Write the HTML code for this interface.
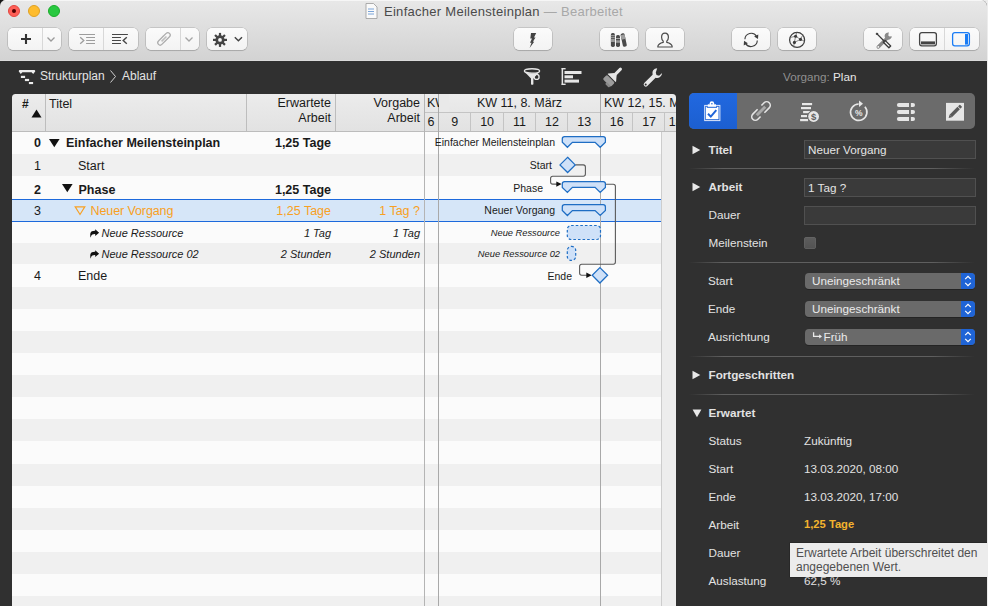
<!DOCTYPE html>
<html><head><meta charset="utf-8">
<style>
*{margin:0;padding:0;box-sizing:border-box}
html,body{width:988px;height:606px;overflow:hidden;background:#ececec}
body{position:relative;font-family:"Liberation Sans",sans-serif;}
.a{position:absolute}
#win{position:absolute;left:0;top:0;width:987px;height:606px;border-radius:6px 6px 0 0;overflow:hidden;background:#303030}
#tb{position:absolute;left:0;top:0;width:987px;height:61px;background:linear-gradient(#e8e8e8,#d3d3d3);border-bottom:1px solid #dadada;box-shadow:inset 0 1px 0 #f6f6f6}
.light{position:absolute;width:12px;height:12px;border-radius:50%}
.btn{position:absolute;top:28px;height:22px;background:linear-gradient(#fbfbfb,#f3f3f3);border-radius:5px;box-shadow:0 0 0 0.5px rgba(0,0,0,.22),0 1px 1px rgba(0,0,0,.12)}
.sep{position:absolute;top:0;width:1px;height:22px;background:#d8d8d8}
.title{position:absolute;top:4px;left:384px;font-size:13px;letter-spacing:.28px;color:#4a4a4a;white-space:pre}
/* table */
#tbl{position:absolute;left:12px;top:93px;width:664px;height:513px;background:#fbfbfb;overflow:hidden}
.hdr{position:absolute;top:0;height:38px;background:linear-gradient(#ececec,#e2e2e2);border-bottom:1px solid #bcbcbc}
.vl{position:absolute;width:1px;background:#c3c3c3}
.row{position:absolute;left:0;width:649px;height:22px}
.t{position:absolute;white-space:pre;font-size:12.5px;color:#1a1a1a}
.b{font-weight:bold}
.r{text-align:right}
#insp{position:absolute;left:676px;top:61px;width:311px;height:545px;background:#2e2e2e}
.lab{position:absolute;white-space:pre;font-size:11.7px;color:#e6e6e6}
.fld{position:absolute;left:128px;width:172px;height:19px;background:#393939;border:1px solid #4e4e4e}
.pop{position:absolute;left:129px;width:170px;height:16px;background:#6a6a6a;border-radius:4px;overflow:hidden}
.hsep{position:absolute;left:13px;width:286px;height:1px;background:linear-gradient(90deg,rgba(90,90,90,0),#5a5a5a 8%,#5a5a5a 92%,rgba(90,90,90,0))}
</style></head><body>
<div class="a" style="left:0;top:0;width:8px;height:8px;background:radial-gradient(circle at 0 0,#111 0,#222 40%,rgba(40,40,40,0) 100%)"></div>
<div id="win">
 <div id="tb">
  <div class="light" style="left:8px;top:5px;background:#fe5f57;border:0.5px solid #e2463f"></div>
  <div class="a" style="left:12px;top:9px;width:4px;height:4px;border-radius:50%;background:#4d0000"></div>
  <div class="light" style="left:28px;top:5px;background:#febc2e;border:0.5px solid #dea123"></div>
  <div class="light" style="left:48px;top:5px;background:#28c840;border:0.5px solid #1aab29"></div>

  <div class="btn" style="left:8px;width:53px"><div class="sep" style="left:34px"></div>
   <svg class="a" style="left:0;top:0" width="53" height="22"><path d="M18 6v10M13 11h10" stroke="#333" stroke-width="2.1"/><path d="M39.5 9.5l3.5 3.5 3.5-3.5" fill="none" stroke="#9a9a9a" stroke-width="1.3"/></svg></div>
  <div class="btn" style="left:69px;width:69px"><div class="sep" style="left:34px"></div>
   <svg class="a" style="left:0;top:0" width="69" height="22"><g stroke="#9d9d9d" stroke-width="1" fill="none"><path d="M10.2 6.5H26M17.1 9.5H26M17.1 12.5H26M17.1 15.5H26"/><path d="M11.2 9.2L14.8 12.5L11.2 15.8" stroke-width="1.3"/></g>
   <g stroke="#474747" stroke-width="1.15" fill="none"><path d="M43 6.5H58.9M43 9.5H51.9M43 12.5H51.9M43 15.5H51.9"/><path d="M57.8 9.2L54.2 12.5L57.8 15.8" stroke-width="1.4"/></g></svg></div>
  <div class="btn" style="left:146px;width:53px"><div class="sep" style="left:34px"></div>
   <svg class="a" style="left:0;top:0" width="53" height="22"><g transform="translate(18 10.9) rotate(-45) scale(.82)" fill="none" stroke="#acacac" stroke-width="1.5"><path d="M1.6 -2.9H-6.6A2.9 2.9 0 0 0 -6.6 2.9H-1.2"/><path d="M-1.6 2.9H6.6A2.9 2.9 0 0 0 6.6 -2.9H1.2"/><path d="M-4.2 0H4.2" stroke="#bdbdbd" stroke-width="2"/></g><path d="M39.5 9.5l3.5 3.5 3.5-3.5" fill="none" stroke="#a5a5a5" stroke-width="1.3"/></svg></div>
  <div class="btn" style="left:207px;width:40px">
   <svg class="a" style="left:0;top:0" width="40" height="22"><g transform="translate(13 11.9)"><g fill="#444"><circle r="4.6"/><rect x="-1.1" y="-7" width="2.2" height="14"/><rect x="-1.1" y="-7" width="2.2" height="14" transform="rotate(45)"/><rect x="-1.1" y="-7" width="2.2" height="14" transform="rotate(90)"/><rect x="-1.1" y="-7" width="2.2" height="14" transform="rotate(135)"/></g><circle r="1.9" fill="#f6f6f6"/></g><path d="M27.8 9.3l3.6 3.4 3.6-3.4" fill="none" stroke="#444" stroke-width="1.5"/></svg></div>
  <div class="btn" style="left:514px;width:38px">
   <svg class="a" style="left:0;top:0" width="38" height="22"><path d="M17 5h5.2l-2.2 4.5h1.5l-2.6 4.2h1.3l-4.6 6.2 1.9-5.2h-1.5l2-4.3h-1.7z" fill="#444"/></svg></div>
  <div class="btn" style="left:600px;width:38px">
   <svg class="a" style="left:0;top:0" width="38" height="22"><defs><clipPath id="bk1"><rect x="10.9" y="5.1" width="4" height="13.8" rx="1.6"/></clipPath><clipPath id="bk2"><rect x="16" y="7.1" width="4" height="11.8" rx="1.6"/></clipPath></defs>
   <g clip-path="url(#bk1)"><rect x="10" y="5" width="6" height="14" fill="#4a4a4a"/><rect x="10" y="7.2" width="6" height="1" fill="#a8a8a8"/><rect x="10" y="9.2" width="6" height=".9" fill="#a8a8a8"/><rect x="10" y="10.9" width="6" height="3.1" fill="#9a9a9a"/></g>
   <g clip-path="url(#bk2)"><rect x="15" y="7" width="6" height="12" fill="#4a4a4a"/><rect x="15" y="10" width="6" height="1" fill="#a8a8a8"/><rect x="15" y="12.3" width="6" height="2.5" fill="#9a9a9a"/></g>
   <g transform="rotate(-12 23.7 12)"><rect x="21.7" y="5.2" width="4" height="13.6" rx="1.6" fill="#4a4a4a"/><rect x="21.7" y="6.6" width="4" height="4.6" fill="#9c9c9c"/></g></svg></div>
  <div class="btn" style="left:646px;width:38px">
   <svg class="a" style="left:0;top:0" width="38" height="22"><path d="M19 5.2c-2.2 0-3.4 1.8-3.4 4 0 1.8.8 3.2 1.6 3.9v1.2c-2.5.6-4.9 1.7-5.3 3.9v.8h14.2v-.8c-.4-2.2-2.8-3.3-5.3-3.9v-1.2c.8-.7 1.6-2.1 1.6-3.9 0-2.2-1.2-4-3.4-4z" fill="none" stroke="#4a4a4a" stroke-width="1.2"/></svg></div>
  <div class="btn" style="left:732px;width:38px">
   <svg class="a" style="left:0;top:0" width="38" height="22"><g fill="none" stroke="#3e3e3e" stroke-width="1.15"><path d="M12.9 11.3a6.3 6.3 0 0 1 11.6-3.1"/><path d="M25.3 12.5a6.3 6.3 0 0 1-11.6 3.1"/></g><path d="M26.3 6.4l-.3 4.6-3.9-2.4z" fill="#3e3e3e"/><path d="M11.7 17.4l.3-4.6 3.9 2.4z" fill="#3e3e3e"/></svg></div>
  <div class="btn" style="left:778px;width:38px">
   <svg class="a" style="left:0;top:0" width="38" height="22"><circle cx="19.1" cy="11.9" r="7.5" fill="none" stroke="#3e3e3e" stroke-width="1.25"/><g stroke="#666" stroke-width=".75" fill="none"><path d="M17.6 8.3L22.5 11.4L16.4 14.4ZM17.6 8.3L19 4.4M17.6 8.3L12 9.5M22.5 11.4L26.4 13.2M16.4 14.4L15.6 19.2M22.5 11.4L25 6.5"/></g><g fill="#3a3a3a"><circle cx="17.6" cy="8.3" r="1.55"/><circle cx="22.5" cy="11.4" r="1.55"/><circle cx="16.4" cy="14.4" r="1.55"/></g></svg></div>
  <div class="btn" style="left:864px;width:38px">
   <svg class="a" style="left:0;top:0" width="38" height="22"><path d="M23.6 9.6L14.2 19" stroke="#8a8a8a" stroke-width="3.4" stroke-linecap="round"/><circle cx="14.3" cy="18.9" r=".9" fill="#f7f7f7"/><path d="M25.2 4.6a3.6 3.6 0 1 0 2.6 3.6l-2.3.4-1.2-1.2.4-2.3z" fill="#8a8a8a"/>
   <path d="M12.8 5.6L19.8 12.8" stroke="#3a3a3a" stroke-width="1.3"/><path d="M12.2 5.2l1.6 1.4" stroke="#3a3a3a" stroke-width="2"/><path d="M19.3 14.2l1.8-1.8 5.6 5.6-1.8 1.8z" fill="none" stroke="#3a3a3a" stroke-width="1.3" stroke-linejoin="round"/></svg></div>
  <div class="btn" style="left:910px;width:69px"><div class="sep" style="left:34px"></div>
   <svg class="a" style="left:0;top:0" width="69" height="22"><rect x="9.6" y="4.6" width="16.8" height="13.2" rx="2.2" fill="none" stroke="#444" stroke-width="1.3"/><rect x="11" y="13.4" width="14" height="3" fill="#444"/>
   <rect x="42.6" y="4.6" width="16.8" height="13.2" rx="2.2" fill="none" stroke="#1a7cf5" stroke-width="1.3"/><rect x="55" y="6" width="3" height="10.6" fill="#1a7cf5"/></svg></div>
  <svg class="a" style="left:365px;top:3px" width="13" height="16"><path d="M1 .5h7.5l3.5 3.5v11.5h-11z" fill="#fafafa" stroke="#9a9a9a" stroke-width=".8"/><path d="M3 6h6M3 8.5h6M3 11h6" stroke="#5b8fd0" stroke-width=".8"/></svg>
  <div class="title">Einfacher Meilensteinplan <span style="color:#a8a8a8">— Bearbeitet</span></div>
 </div>

 <div class="a" style="left:0;top:62px;width:676px;height:31px;background:#303030"></div>
 <svg class="a" style="left:18px;top:69px" width="18" height="16"><g fill="#ececec"><path d="M1.8 .9H16.2Q17.2 .9 17.2 1.9V2.6L15.2 4.9L13.6 3.2H4.4L2.8 4.9L.8 2.6V1.9Q.8 .9 1.8 .9Z"/><rect x="2.9" y="6.8" width="4.2" height="2.2"/><rect x="6.9" y="9.9" width="4.2" height="2.2"/><rect x="10.9" y="13" width="4.2" height="2.1"/></g></svg>
 <div class="a" style="left:40px;top:69px;font-size:12px;color:#e4e4e4;white-space:pre">Strukturplan</div>
 <svg class="a" style="left:109px;top:69px" width="8" height="15"><path d="M1.5 1.5l5 6-5 6" fill="none" stroke="#cfcfcf" stroke-width="1"/></svg>
 <div class="a" style="left:122px;top:69px;font-size:12px;color:#e4e4e4;white-space:pre">Ablauf</div>
 <svg class="a" style="left:520px;top:66px" width="150" height="22">
  <ellipse cx="12" cy="4.9" rx="7.6" ry="2.2" fill="none" stroke="#e6e6e6" stroke-width="1.4"/>
  <path d="M5 6.2Q12 9 19 6.2L13.4 12.5V18.2Q12.2 19.4 11 18.2V12.5Z" fill="#e6e6e6"/>
  <circle cx="16.6" cy="10.9" r="2.5" fill="none" stroke="#e6e6e6" stroke-width="1.3"/>
  <g fill="#e6e6e6"><rect x="41.6" y="2" width="1.5" height="17"/><rect x="41.6" y="2" width="4" height="1.4"/><rect x="41.6" y="17.6" width="4" height="1.4"/><rect x="44.5" y="5" width="17" height="3"/><rect x="44.5" y="9.3" width="8.5" height="3"/><rect x="44.5" y="13.6" width="14.5" height="3"/></g>
  <g transform="translate(92.3 11.3) rotate(45)"><rect x="-1.5" y="-13" width="3" height="10" rx="1.5" fill="#e6e6e6"/><path d="M-1.6 -4.5H1.6L5.6 .2V1H-5.6V.2Z" fill="#e6e6e6"/><rect x="-5.6" y="2" width="11.2" height="6" rx="1.4" fill="#9c9c9c"/><rect x="-.5" y="7.2" width="5.4" height="2.6" rx="1" fill="#8a8a8a"/></g>
  <path d="M137.2 2.2a4.9 4.9 0 0 0-4.6 6.6l-8.4 8.2a2.2 2.2 0 0 0 3.1 3.1l8.3-8.4a4.9 4.9 0 0 0 6.5-4.6l-3 2.6-2.6-.7-.7-2.6z" fill="#e6e6e6"/><circle cx="125.7" cy="18.5" r="1" fill="#303030"/>
 </svg>

<!--TBL-->
<div id="tbl">
<div class="a" style="left:0;top:39px;width:649px;height:22px;background:#fbfbfb"></div>
<div class="a" style="left:0;top:61px;width:649px;height:22px;background:#f0f0f0"></div>
<div class="a" style="left:0;top:83px;width:649px;height:23px;background:#fbfbfb"></div>
<div class="a" style="left:0;top:106px;width:649px;height:22px;background:#f0f0f0"></div>
<div class="a" style="left:0;top:128px;width:649px;height:22px;background:#fbfbfb"></div>
<div class="a" style="left:0;top:150px;width:649px;height:21px;background:#f0f0f0"></div>
<div class="a" style="left:0;top:171px;width:649px;height:23px;background:#fbfbfb"></div>
<div class="a" style="left:0;top:194px;width:649px;height:22px;background:#f0f0f0"></div>
<div class="a" style="left:0;top:216px;width:649px;height:22px;background:#fbfbfb"></div>
<div class="a" style="left:0;top:238px;width:649px;height:22px;background:#f0f0f0"></div>
<div class="a" style="left:0;top:260px;width:649px;height:22px;background:#fbfbfb"></div>
<div class="a" style="left:0;top:282px;width:649px;height:22px;background:#f0f0f0"></div>
<div class="a" style="left:0;top:304px;width:649px;height:22px;background:#fbfbfb"></div>
<div class="a" style="left:0;top:326px;width:649px;height:22px;background:#f0f0f0"></div>
<div class="a" style="left:0;top:348px;width:649px;height:23px;background:#fbfbfb"></div>
<div class="a" style="left:0;top:371px;width:649px;height:22px;background:#f0f0f0"></div>
<div class="a" style="left:0;top:393px;width:649px;height:22px;background:#fbfbfb"></div>
<div class="a" style="left:0;top:415px;width:649px;height:22px;background:#f0f0f0"></div>
<div class="a" style="left:0;top:437px;width:649px;height:22px;background:#fbfbfb"></div>
<div class="a" style="left:0;top:459px;width:649px;height:22px;background:#f0f0f0"></div>
<div class="a" style="left:0;top:481px;width:649px;height:22px;background:#fbfbfb"></div>
<div class="a" style="left:0;top:503px;width:649px;height:22px;background:#f0f0f0"></div>
<div class="a" style="left:0;top:106px;width:649px;height:23px;background:#d6e6f8;border-top:1px solid #1c69dc;border-bottom:1px solid #1c69dc"></div>
<div class="hdr" style="left:0;width:664px;height:39px"></div>
<div class="vl" style="left:33px;top:1px;height:37px;background:#bdbdbd"></div>
<div class="vl" style="left:234px;top:1px;height:37px;background:#bdbdbd"></div>
<div class="vl" style="left:323px;top:1px;height:37px;background:#bdbdbd"></div>
<div class="vl" style="left:412px;top:0;height:513px;background:#b4b4b4"></div>
<div class="a" style="left:413px;top:19px;width:251px;height:1px;background:#c4c4c4"></div>
<div class="vl" style="left:426px;top:0;height:513px;background:#a9a9a9"></div>
<div class="vl" style="left:588px;top:0;height:513px;background:#a9a9a9"></div>
<div class="vl" style="left:458px;top:20px;height:18px;background:#c4c4c4"></div>
<div class="vl" style="left:491px;top:20px;height:18px;background:#c4c4c4"></div>
<div class="vl" style="left:523px;top:20px;height:18px;background:#c4c4c4"></div>
<div class="vl" style="left:555px;top:20px;height:18px;background:#c4c4c4"></div>
<div class="vl" style="left:620px;top:20px;height:18px;background:#c4c4c4"></div>
<div class="vl" style="left:652px;top:20px;height:18px;background:#c4c4c4"></div>
<div class="a" style="left:649px;top:39px;width:15px;height:474px;background:#ededed;border-left:1px solid #cdcdcd"></div>
<div class="t b" style="left:10px;top:4px;font-size:12px">#</div>
<svg class="a" style="left:19px;top:16px" width="11" height="9"><path d="M0.5 8.5h10l-5-8z" fill="#111"/></svg>
<div class="t" style="left:37px;top:4px">Titel</div>
<div class="t r" style="left:234px;top:3px;width:85px;line-height:15px">Erwartete<br>Arbeit</div>
<div class="t r" style="left:323px;top:3px;width:85px;line-height:15px">Vorgabe<br>Arbeit</div>
<div class="t" style="left:415px;top:3px">KW</div>
<div class="a" style="left:427px;top:1px;width:10px;height:18px;background:#e9e9e9"></div>
<div class="t" style="left:427px;top:3px;width:161px;text-align:center">KW 11, 8. März</div>
<div class="t" style="left:592px;top:3px">KW 12, 15. März</div>
<div class="t" style="left:399px;top:22px;width:40px;text-align:center">6</div>
<div class="t" style="left:422.7px;top:22px;width:40px;text-align:center">9</div>
<div class="t" style="left:455.1px;top:22px;width:40px;text-align:center">10</div>
<div class="t" style="left:487.5px;top:22px;width:40px;text-align:center">11</div>
<div class="t" style="left:519.9px;top:22px;width:40px;text-align:center">12</div>
<div class="t" style="left:552.3px;top:22px;width:40px;text-align:center">13</div>
<div class="t" style="left:584.7px;top:22px;width:40px;text-align:center">16</div>
<div class="t" style="left:617.1px;top:22px;width:40px;text-align:center">17</div>
<div class="t" style="left:643.6px;top:22px;width:40px;text-align:center">18</div>
<div class="t r" style="left:-71px;top:39px;width:100px;line-height:22px;font-size:12.5px;font-weight:bold;">0</div>
<div class="t r" style="left:-71px;top:62px;width:100px;line-height:22px;font-size:12.5px;">1</div>
<div class="t r" style="left:-71px;top:86px;width:100px;line-height:22px;font-size:12.5px;font-weight:bold;">2</div>
<div class="t r" style="left:-71px;top:107px;width:100px;line-height:22px;font-size:12.5px;">3</div>
<div class="t r" style="left:-71px;top:172px;width:100px;line-height:22px;font-size:12.5px;">4</div>
<svg class="a" style="left:37.4px;top:46px" width="12" height="10"><path d="M0 .1h10.6l-5.3 8.2z" fill="#111"/></svg>
<div class="t b" style="left:54px;top:39px;line-height:22px;font-size:12.5px;">Einfacher Meilensteinplan</div>
<div class="t " style="left:66px;top:62px;line-height:22px;font-size:12.5px;">Start</div>
<svg class="a" style="left:50.2px;top:91px" width="12" height="10"><path d="M0 .1h10.6l-5.3 8.2z" fill="#111"/></svg>
<div class="t b" style="left:66.5px;top:86px;line-height:22px;font-size:12.5px;">Phase</div>
<svg class="a" style="left:61.599999999999994px;top:112.80000000000001px" width="12" height="10"><path d="M1.2 .9h9.6l-4.8 7.6z" fill="none" stroke="#f8a023" stroke-width="1.2"/></svg>
<div class="t " style="left:78.5px;top:107px;line-height:22px;font-size:12.5px;color:#f8a023;letter-spacing:-.1px;">Neuer Vorgang</div>
<svg class="a" style="left:78px;top:136px" width="10" height="9"><path d="M5.2 0.3l3.9 3.4-3.9 3.4v-2c-2.2-.1-3.6.6-4.2 2.4-.3.7-.5 1.2-.5 1.2S0 5.6.4 4.2C1 2.5 2.6 1.7 5.2 1.8z" fill="#111"/></svg>
<svg class="a" style="left:78px;top:157px" width="10" height="9"><path d="M5.2 0.3l3.9 3.4-3.9 3.4v-2c-2.2-.1-3.6.6-4.2 2.4-.3.7-.5 1.2-.5 1.2S0 5.6.4 4.2C1 2.5 2.6 1.7 5.2 1.8z" fill="#111"/></svg>
<div class="t " style="left:89.5px;top:129px;line-height:22px;font-size:11px;font-style:italic;">Neue Ressource</div>
<div class="t " style="left:89.5px;top:150px;line-height:22px;font-size:11px;font-style:italic;">Neue Ressource 02</div>
<div class="t " style="left:66px;top:172px;line-height:22px;font-size:12.5px;">Ende</div>
<div class="t r" style="left:219px;top:39px;width:100px;line-height:22px;font-size:12.5px;font-weight:bold;">1,25 Tage</div>
<div class="t r" style="left:219px;top:86px;width:100px;line-height:22px;font-size:12.5px;font-weight:bold;">1,25 Tage</div>
<div class="t r" style="left:219px;top:107px;width:100px;line-height:22px;font-size:12.5px;color:#f8a023;">1,25 Tage</div>
<div class="t r" style="left:308px;top:107px;width:100px;line-height:22px;font-size:12.5px;color:#f8a023;">1 Tag ?</div>
<div class="t r" style="left:219px;top:129px;width:100px;line-height:22px;font-size:11px;font-style:italic;">1 Tag</div>
<div class="t r" style="left:308px;top:129px;width:100px;line-height:22px;font-size:11px;font-style:italic;">1 Tag</div>
<div class="t r" style="left:219px;top:150px;width:100px;line-height:22px;font-size:11px;font-style:italic;">2 Stunden</div>
<div class="t r" style="left:308px;top:150px;width:100px;line-height:22px;font-size:11px;font-style:italic;">2 Stunden</div>
<div class="t r" style="left:383px;top:38px;width:160px;line-height:22px;font-size:10.5px;">Einfacher Meilensteinplan</div>
<div class="t r" style="left:380px;top:61px;width:160px;line-height:22px;font-size:10.5px;">Start</div>
<div class="t r" style="left:371px;top:84px;width:160px;line-height:22px;font-size:10.5px;">Phase</div>
<div class="t r" style="left:383px;top:106px;width:160px;line-height:22px;font-size:10.5px;">Neuer Vorgang</div>
<div class="t r" style="left:388px;top:129px;width:160px;line-height:22px;font-size:9.3px;font-style:italic;">Neue Ressource</div>
<div class="t r" style="left:388px;top:150px;width:160px;line-height:22px;font-size:9.3px;font-style:italic;">Neue Ressource 02</div>
<div class="t r" style="left:400px;top:172px;width:160px;line-height:22px;font-size:10.5px;">Ende</div>
</div>
<div class="a" style="left:12px;top:93px;width:664px;height:1px;background:#303030"></div><svg class="a" style="left:12px;top:94px" width="4" height="4"><path d="M0 0H3.5A3.5 3.5 0 0 0 0 3.5Z" fill="#303030"/></svg><svg class="a" style="left:672px;top:94px" width="4" height="4"><path d="M4 0H.5A3.5 3.5 0 0 1 4 3.5Z" fill="#303030"/></svg>
<!--/TBL-->

 <svg class="a" style="left:0;top:0" width="988" height="606">
  <defs><clipPath id="gc"><rect x="425" y="132" width="236" height="474"/></clipPath></defs>
  <g clip-path="url(#gc)">
  <g fill="none" stroke="#5a5a5a" stroke-width="1.1">
   <path d="M575.3 164.9H583.3Q585.4 164.9 585.4 167V174.1Q585.4 176.2 583.3 176.2H552.7Q550.6 176.2 550.6 178.3V182Q550.6 184.1 552.7 184.1H557"/>
   <path d="M605.5 184.2H613.3Q615.4 184.2 615.4 186.3V262.1Q615.4 264.2 613.3 264.2H581.7Q579.6 264.2 579.6 266.3V273.1Q579.6 275.2 581.7 275.2H587"/>
  </g>
  <g fill="#111"><path d="M556.3 181.4L561.6 184.1L556.3 186.8Z"/><path d="M586.3 272.5L591.7 275.2L586.3 277.9Z"/></g>
  <g fill="#cfe1f8" stroke="#1f6ec4" stroke-width="1.25" stroke-linejoin="miter">
   <path d="M564.6 136.5H603.2Q605.4 136.5 605.4 138.7V142.3L600.2 147.3L595.1 142.3H572.4L567.4 147.3L562.3 142.3V138.7Q562.3 136.5 564.6 136.5Z"/>
   <path d="M564.6 181.6H603.2Q605.4 181.6 605.4 183.79999999999998V187.4L600.2 192.4L595.1 187.4H572.4L567.4 192.4L562.3 187.4V183.79999999999998Q562.3 181.6 564.6 181.6Z"/>
   <path d="M564.6 204.7H603.2Q605.4 204.7 605.4 206.89999999999998V210.5L600.2 215.5L595.1 210.5H572.4L567.4 215.5L562.3 210.5V206.89999999999998Q562.3 204.7 564.6 204.7Z"/>
   <path d="M567.6 157.3L575.2 164.9L567.6 172.5L560.0 164.9Z"/>
   <path d="M599.9 267.6L607.6 275.3L599.9 283.0L592.1999999999999 275.3Z"/>
  </g>
  <g fill="#cfe1f8" stroke="#1f6ec4" stroke-width="1.2" stroke-dasharray="2.6 2">
   <rect x="567.3" y="225.5" width="33.2" height="14" rx="3.8"/>
   <rect x="567.3" y="246.4" width="8.4" height="14" rx="4"/>
  </g>
  </g>
 </svg>

 <div class="a" style="left:676px;top:62px;width:311px;height:544px;background:#303030"></div>
  <div class="lab" style="left:783px;top:70px;color:#8f8f8f">Vorgang: <span style="color:#e8e8e8">Plan</span></div>
 <div class="a" style="left:689px;top:93px;width:286px;height:36px;background:#6b6b6b;border-radius:5px;overflow:hidden">
  <div class="a" style="left:0;top:0;width:48px;height:36px;background:linear-gradient(#2168e0,#1c5fd0)"></div>
 </div>
 <svg class="a" style="left:689px;top:93px" width="286" height="36">
   <rect x="15.7" y="12.4" width="15.2" height="15.2" fill="none" stroke="#dfe8fb" stroke-width="1"/>
   <rect x="16.9" y="13.8" width="12.6" height="12.4" fill="#fff"/>
   <path d="M18.8 11.3h8.2v3.2h-8.2z" fill="#fff"/><rect x="17.8" y="13.8" width="10.2" height="1" fill="#1f64d8"/><circle cx="22.9" cy="10.6" r="2.3" fill="#fff"/><circle cx="22.9" cy="10.7" r=".8" fill="#1f64d8"/>
   <path d="M19 20.8l2.8 2.8 5.5-6.4" fill="none" stroke="#1f64d8" stroke-width="2"/>
  <g transform="translate(72 18) rotate(-45)" fill="none" stroke="#e4e4e4" stroke-width="1.6">
   <path d="M-1.2 -3.6H-8A3.6 3.6 0 0 0 -8 3.6H-4.2"/><path d="M1.2 3.6H8A3.6 3.6 0 0 0 8 -3.6H4.2"/>
   <path d="M-6 0H6" stroke="#a9a9a9" stroke-width="3"/>
  </g>
  <g fill="#e8e8e8"><rect x="113" y="10" width="10.1" height="2.2"/><rect x="112" y="14" width="10" height="2.2"/><rect x="114.1" y="18" width="7" height="2.2"/><rect x="112" y="22" width="6" height="2.2"/><rect x="111.1" y="26" width="8" height="2.2"/></g>
  <circle cx="124.6" cy="23.5" r="6.3" fill="#6b6b6b"/><circle cx="124.6" cy="23.5" r="5.4" fill="#e6e6e6"/>
  <text x="124.7" y="26.9" font-family="Liberation Sans" font-weight="bold" font-size="9.5" fill="#5e5e5e" text-anchor="middle">$</text>
  <path d="M169.7 11A8.2 8.2 0 1 0 175.9 13.8" fill="none" stroke="#e6e6e6" stroke-width="1.7"/>
  <path d="M170 7.6l4 3.2-4 3.2z" fill="#e6e6e6"/>
  <text x="169.7" y="23" font-family="Liberation Sans" font-size="8.5" font-weight="bold" fill="#e6e6e6" text-anchor="middle">%</text>
  <g fill="#e6e6e6"><path d="M209.9 10H220v4h-10.1a2 2 0 0 1 0-4z"/><path d="M209.9 17H220v4h-10.1a2 2 0 0 1 0-4z"/><path d="M209.9 24H220v4h-10.1a2 2 0 0 1 0-4z"/>
  <path d="M221.9 10H224a2 2 0 0 1 0 4h-2.1z"/><path d="M221.9 17H224a2 2 0 0 1 0 4h-2.1z"/><path d="M221.9 24H224a2 2 0 0 1 0 4h-2.1z"/></g>
  <rect x="257" y="9.9" width="18" height="17.8" fill="#e6e6e6"/>
  <g transform="translate(266 18.7) rotate(-45)"><rect x="-6" y="-1.7" width="11.2" height="3.4" fill="#5a5a5a"/><path d="M-6 -1.7L-9 0L-6 1.7Z" fill="#5a5a5a"/><rect x="5.9" y="-1.7" width="2.6" height="3.4" rx=".6" fill="#5a5a5a"/></g>
 </svg>
<svg class="a" style="left:692px;top:145px" width="9" height="10"><path d="M.5 .8L8.3 5L.5 9.2Z" fill="#e8e8e8"/></svg>
<div class="lab" style="left:708.5px;top:143px;font-size:11.7px;font-weight:bold;color:#e2e2e2">Titel</div>
<div class="a" style="left:804px;top:140px;width:172px;height:19px;background:#3a3a3a;border:1px solid #505050"><div class="lab" style="left:3px;top:2px;color:#e4e4e4">Neuer Vorgang</div></div>
<div class="a" style="left:689px;top:168px;width:286px;height:1px;background:linear-gradient(90deg,rgba(95,95,95,0),#5f5f5f 12%,#5f5f5f 85%,rgba(95,95,95,0))"></div>
<svg class="a" style="left:692px;top:182px" width="9" height="10"><path d="M.5 .8L8.3 5L.5 9.2Z" fill="#e8e8e8"/></svg>
<div class="lab" style="left:708.5px;top:180px;font-size:11.7px;font-weight:bold;color:#e2e2e2">Arbeit</div>
<div class="a" style="left:804px;top:178px;width:172px;height:19px;background:#3a3a3a;border:1px solid #505050"><div class="lab" style="left:3px;top:2px;color:#e4e4e4">1 Tag ?</div></div>
<div class="lab" style="left:708.5px;top:208px;font-size:11.7px;color:#e2e2e2">Dauer</div>
<div class="a" style="left:804px;top:206px;width:172px;height:19px;background:#3a3a3a;border:1px solid #505050"><div class="lab" style="left:3px;top:2px;color:#e4e4e4"></div></div>
<div class="lab" style="left:708.5px;top:236px;font-size:11.7px;color:#e2e2e2">Meilenstein</div>
<div class="a" style="left:804px;top:237px;width:12px;height:12px;border-radius:3px;background:linear-gradient(#5d5d5d,#525252);box-shadow:inset 0 0 0 .5px #6a6a6a"></div>
<div class="a" style="left:689px;top:262px;width:286px;height:1px;background:linear-gradient(90deg,rgba(95,95,95,0),#5f5f5f 12%,#5f5f5f 85%,rgba(95,95,95,0))"></div>
<div class="lab" style="left:708px;top:274px;font-size:11.7px;color:#e2e2e2">Start</div>
<div class="a" style="left:805px;top:273px;width:170px;height:16px;background:#6a6a6a;border-radius:4px;overflow:hidden;box-shadow:0 1px 0 rgba(0,0,0,.25)"><div class="lab" style="left:7px;top:1px;color:#eaeaea">Uneingeschränkt</div><div class="a" style="left:156px;top:0;width:14px;height:16px;background:#1f64d6"></div><svg class="a" style="left:156px;top:0" width="14" height="16"><path d="M4.2 6.2L7 3.4L9.8 6.2M4.2 9.8L7 12.6L9.8 9.8" fill="none" stroke="#fff" stroke-width="1.2"/></svg></div>
<div class="lab" style="left:708px;top:302px;font-size:11.7px;color:#e2e2e2">Ende</div>
<div class="a" style="left:805px;top:301px;width:170px;height:16px;background:#6a6a6a;border-radius:4px;overflow:hidden;box-shadow:0 1px 0 rgba(0,0,0,.25)"><div class="lab" style="left:7px;top:1px;color:#eaeaea">Uneingeschränkt</div><div class="a" style="left:156px;top:0;width:14px;height:16px;background:#1f64d6"></div><svg class="a" style="left:156px;top:0" width="14" height="16"><path d="M4.2 6.2L7 3.4L9.8 6.2M4.2 9.8L7 12.6L9.8 9.8" fill="none" stroke="#fff" stroke-width="1.2"/></svg></div>
<div class="lab" style="left:708px;top:330px;font-size:11.7px;color:#e2e2e2">Ausrichtung</div>
<div class="a" style="left:805px;top:329px;width:170px;height:16px;background:#6a6a6a;border-radius:4px;overflow:hidden;box-shadow:0 1px 0 rgba(0,0,0,.25)"><svg class="a" style="left:0;top:0" width="20" height="16"><path d="M8.6 3.2V7.4H15.5" fill="none" stroke="#eaeaea" stroke-width="1.3"/><path d="M14.2 5.2L17 7.4L14.2 9.6Z" fill="#eaeaea"/></svg><div class="lab" style="left:18.5px;top:1px;color:#eaeaea">Früh</div><div class="a" style="left:156px;top:0;width:14px;height:16px;background:#1f64d6"></div><svg class="a" style="left:156px;top:0" width="14" height="16"><path d="M4.2 6.2L7 3.4L9.8 6.2M4.2 9.8L7 12.6L9.8 9.8" fill="none" stroke="#fff" stroke-width="1.2"/></svg></div>
<div class="a" style="left:689px;top:356px;width:286px;height:1px;background:linear-gradient(90deg,rgba(95,95,95,0),#5f5f5f 12%,#5f5f5f 85%,rgba(95,95,95,0))"></div>
<svg class="a" style="left:692px;top:370px" width="9" height="10"><path d="M.5 .8L8.3 5L.5 9.2Z" fill="#e8e8e8"/></svg>
<div class="lab" style="left:708.5px;top:368px;font-size:11.7px;font-weight:bold;color:#e2e2e2">Fortgeschritten</div>
<div class="a" style="left:689px;top:394px;width:286px;height:1px;background:linear-gradient(90deg,rgba(95,95,95,0),#5f5f5f 12%,#5f5f5f 85%,rgba(95,95,95,0))"></div>
<svg class="a" style="left:692px;top:409px" width="10" height="9"><path d="M.6 .6H9.4L5 8.2Z" fill="#e8e8e8"/></svg>
<div class="lab" style="left:708.5px;top:406px;font-size:11.7px;font-weight:bold;color:#e2e2e2">Erwartet</div>
<div class="lab" style="left:708.5px;top:434px;font-size:11.7px;color:#e2e2e2">Status</div>
<div class="lab" style="left:804px;top:434px;font-size:11.7px;color:#e2e2e2">Zukünftig</div>
<div class="lab" style="left:708.5px;top:462px;font-size:11.7px;color:#e2e2e2">Start</div>
<div class="lab" style="left:804px;top:462px;font-size:11.7px;color:#e2e2e2">13.03.2020, 08:00</div>
<div class="lab" style="left:708.5px;top:490px;font-size:11.7px;color:#e2e2e2">Ende</div>
<div class="lab" style="left:804px;top:490px;font-size:11.7px;color:#e2e2e2">13.03.2020, 17:00</div>
<div class="lab" style="left:708.5px;top:518px;font-size:11.7px;color:#e2e2e2">Arbeit</div>
<div class="lab" style="left:804px;top:518px;font-size:11.2px;font-weight:bold;color:#f3b42e">1,25 Tage</div>
<div class="lab" style="left:708.5px;top:546px;font-size:11.7px;color:#e2e2e2">Dauer</div>
<div class="lab" style="left:708.5px;top:574px;font-size:11.7px;color:#e2e2e2">Auslastung</div>
<div class="lab" style="left:804px;top:574px;font-size:11.7px;color:#e2e2e2">62,5 %</div>
<div class="a" style="left:790px;top:543px;width:197px;height:34px;background:#ececec;box-shadow:0 0 0 .5px rgba(0,0,0,.3)"><div class="a" style="left:6px;top:3px;font-size:12px;line-height:14px;color:#505050;white-space:pre">Erwartete Arbeit überschreitet den
angegebenen Wert.</div></div>
</div>
</body></html>
